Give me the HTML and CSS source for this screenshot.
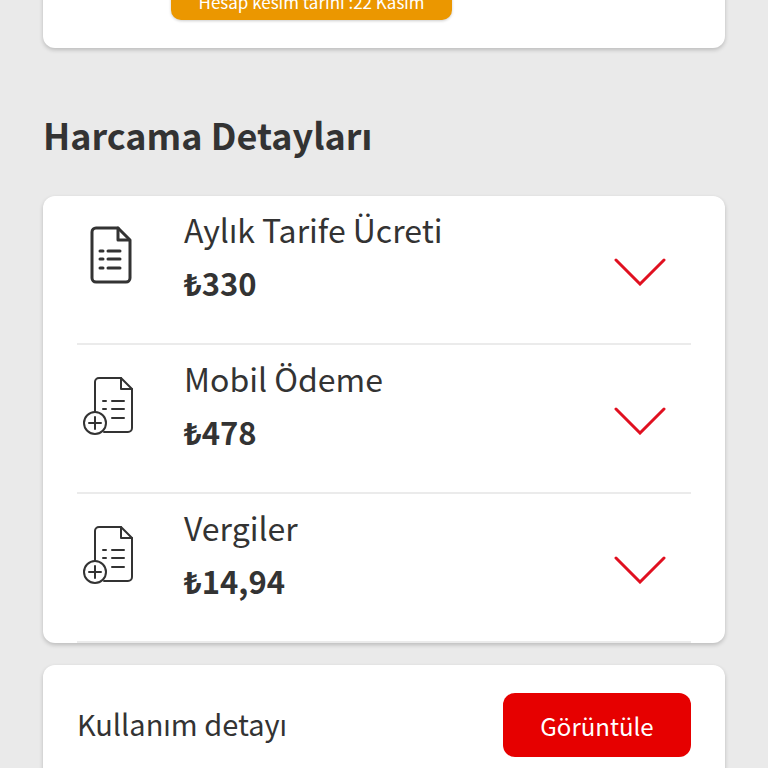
FILE: index.html
```html
<!DOCTYPE html>
<html lang="tr">

<head>
    <meta charset="UTF-8">
    <meta name="viewport" content="width=device-width, initial-scale=1.0">
    <title>Harcama Detayları</title>
    <link rel="stylesheet" href="styles.css">
</head>

<body>
    <main class="page">
        <section class="card summary">
            <p class="badge">Hesap kesim tarihi :22 Kasım</p>
        </section>

        <h1 class="heading">Harcama Detayları</h1>

        <ul class="card list">
            <li class="item">
                <svg class="icon bold" viewBox="0 0 60 64" aria-hidden="true">
                    <path d="M36 6H14a4 4 0 0 0-4 4v46a4 4 0 0 0 4 4h30a4 4 0 0 0 4-4V18z" />
                    <path d="M36 6v12h11" />
                    <path d="M18 29h3M26 29h12M18 37h3M26 37h12M18 46h3M26 46h12" />
                </svg>
                <div class="info">
                    <h2 class="name">Aylık Tarife Ücreti</h2>
                    <p class="price">₺330</p>
                </div>
                <button class="toggle" type="button" aria-label="Aylık Tarife Ücreti">
                    <svg viewBox="0 0 52 28" aria-hidden="true"><path d="M2 2l24 24L50 2" /></svg>
                </button>
            </li>
            <li class="item">
                <svg class="icon" viewBox="0 0 60 64" aria-hidden="true">
                    <path d="M13 40V11a4 4 0 0 1 4-4h22l11 11v39a4 4 0 0 1-4 4H22" />
                    <path d="M39 7v11h11" />
                    <path d="M21 30h3M30 30h12M21 38h3M30 38h12M30 47h12" />
                    <circle cx="13" cy="52" r="11" />
                    <path d="M13 46v12M7 52h12" />
                </svg>
                <div class="info">
                    <h2 class="name">Mobil Ödeme</h2>
                    <p class="price">₺478</p>
                </div>
                <button class="toggle" type="button" aria-label="Mobil Ödeme">
                    <svg viewBox="0 0 52 28" aria-hidden="true"><path d="M2 2l24 24L50 2" /></svg>
                </button>
            </li>
            <li class="item">
                <svg class="icon" viewBox="0 0 60 64" aria-hidden="true">
                    <path d="M13 40V11a4 4 0 0 1 4-4h22l11 11v39a4 4 0 0 1-4 4H22" />
                    <path d="M39 7v11h11" />
                    <path d="M21 30h3M30 30h12M21 38h3M30 38h12M30 47h12" />
                    <circle cx="13" cy="52" r="11" />
                    <path d="M13 46v12M7 52h12" />
                </svg>
                <div class="info">
                    <h2 class="name">Vergiler</h2>
                    <p class="price">₺14,94</p>
                </div>
                <button class="toggle" type="button" aria-label="Vergiler">
                    <svg viewBox="0 0 52 28" aria-hidden="true"><path d="M2 2l24 24L50 2" /></svg>
                </button>
            </li>
        </ul>

        <section class="card usage">
            <p class="usage-text">Kullanım detayı</p>
            <button class="view" type="button">Görüntüle</button>
        </section>
    </main>
</body>

</html>
```
FILE: styles.css
```css
* {
    margin: 0;
    padding: 0;
    box-sizing: border-box;
}

body {
    background-color: #eaeaea;
    color: #333;
    font-family: "Noto Sans CJK SC", "Noto Sans", sans-serif;
    font-weight: 400;
}

.page {
    height: 100vh;
    padding: 0 43px;
    overflow: hidden;
}

.card {
    background-color: #fff;
    border-radius: 12px;
    box-shadow: 0 2px 4px rgba(0, 0, 0, .2);
}

/* the page is scrolled past the top of this card */
.summary {
    display: flex;
    margin-top: -72px;
    padding: 52px 128px 28px;
}

.badge {
    width: 281px;
    padding: 8px 0 4px;
    border-radius: 10px;
    background-color: #eb9700;
    box-shadow: 0 1px 3px rgba(0, 0, 0, .2);
    color: #fff;
    font-size: 17px;
    line-height: 28px;
    text-align: center;
}

.heading {
    margin: 58px 0 34px;
    font-size: 36px;
    font-weight: 700;
    line-height: 56px;
}

.list {
    margin-bottom: 22px;
    padding: 0 34px;
    list-style: none;
}

.item {
    display: flex;
    height: 149px;
    padding-top: 9px;
    border-bottom: 2px solid #ebebeb;
}

.icon {
    width: 60px;
    height: 64px;
    margin: 17px 42px 0 5px;
    fill: none;
    stroke: #333;
    stroke-width: 2;
    stroke-linecap: round;
    stroke-linejoin: round;
}

.bold {
    stroke-width: 3;
}

.info {
    flex: 1;
}

.name {
    font-size: 32px;
    font-weight: 400;
    line-height: 48px;
}

.price {
    margin-top: 8px;
    font-size: 31px;
    font-weight: 700;
    line-height: 44px;
}

.toggle {
    align-self: flex-start;
    width: 52px;
    height: 28px;
    margin: 53px 25px 0 0;
    border: 0;
    background: none;
}

.toggle svg {
    display: block;
    fill: none;
    stroke: #e01020;
    stroke-width: 3;
    stroke-linecap: round;
}

.usage {
    display: flex;
    align-items: center;
    justify-content: space-between;
    padding: 28px 34px;
}

.usage-text {
    padding-bottom: 4px;
    font-size: 29px;
    line-height: 44px;
}

.view {
    width: 188px;
    height: 64px;
    border: 0;
    border-radius: 12px;
    background-color: #e60000;
    color: #fff;
    font: inherit;
    font-size: 24px;
}
```
